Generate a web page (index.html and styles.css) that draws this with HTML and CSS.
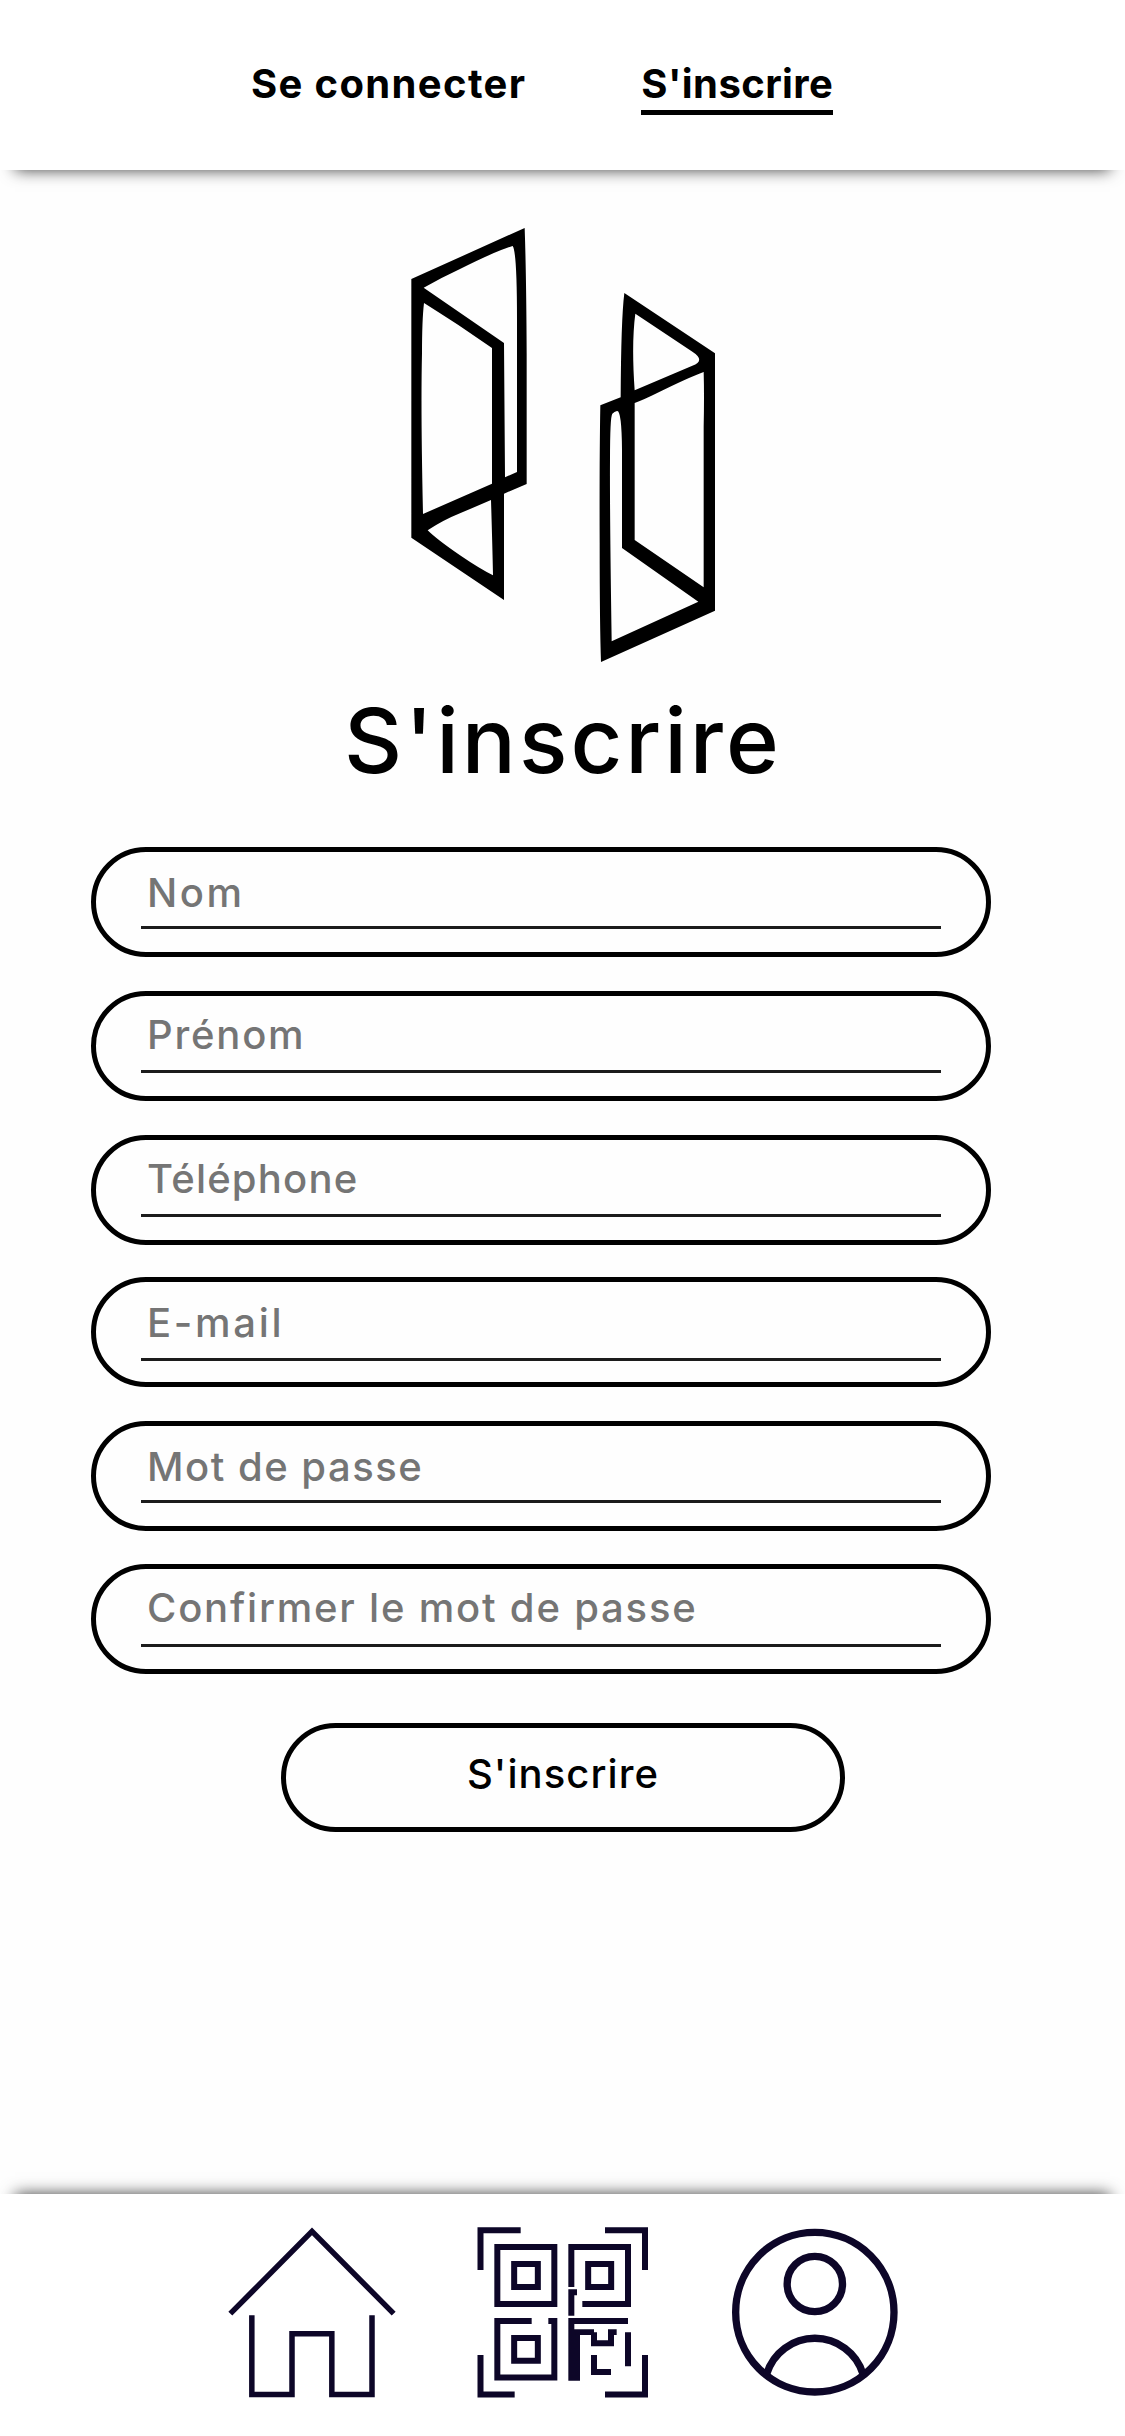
FILE: index.html
```
<!DOCTYPE html>
<html lang="fr">
<head>
<meta charset="utf-8">
<title>S'inscrire</title>
<link rel="stylesheet" href="styles.css">
</head>
<body>
<header class="topbar">
  <a class="tab tab-login">Se connecter</a>
  <a class="tab tab-active">S'inscrire</a>
</header>
<main class="content">
  <svg class="logo" viewBox="90 51 918 1308" fill-rule="evenodd" aria-hidden="true">
    <path d="M94,207 L434,54 Q439,200 440,430 V822 L372,851 V1170 L94,983Z
      M131,233 Q180,205 240,177 Q350,122 398,108 Q411,125 411,330 V786 L375,802 L372,399Z
      M132,279 Q170,303 235,345 L336,414 V821 L129,912 Q122,600 126,430 Q126,330 132,279Z
      M143,961 Q190,930 240,910 L333,870 Q337,1000 339,1096 Q300,1077 240,1036 Q170,988 143,961Z"/>
    <path d="M733,249 L1005,430 V1202 L663,1356 Q659,1250 659,1000 Q658,750 661,586 L722,562 Q723,330 733,249Z
      M766,311 L935,424 Q979,452 937,467 L764,541 Q754,400 766,311Z
      M764,579 Q790,570 830,550 Q920,505 971,486 Q973,560 971,650 V1132 L764,990Z
      M711,603 Q725,600 726,720 V1014 L955,1175 L695,1294 Q689,900 690,750 Q690,620 697,611 Q703,605 711,603Z"/>
  </svg>
  <h1 class="title">S'inscrire</h1>
  <form class="form">
    <label class="field"><input class="input input-lastname" type="text" placeholder="Nom"></label>
    <label class="field"><input class="input input-firstname" type="text" placeholder="Prénom"></label>
    <label class="field"><input class="input input-phone" type="tel" placeholder="Téléphone"></label>
    <label class="field"><input class="input input-email" type="email" placeholder="E-mail"></label>
    <label class="field"><input class="input input-password" type="password" placeholder="Mot de passe"></label>
    <label class="field"><input class="input input-confirm" type="password" placeholder="Confirmer le mot de passe"></label>
  </form>
  <button class="submit" type="button">S'inscrire</button>
</main>
<footer class="navbar">
  <svg class="icon icon-home" viewBox="51 108 510 519" stroke-width="16.5">
    <path d="M61,371 L306,124 L551,371"/>
    <path d="M125.5,376 V613.5 H246 V431.5 H365.5 V613.5 H486 V376"/>
  </svg>
  <svg class="icon icon-scan" viewBox="48 48 519 519" stroke-width="18">
    <path d="M182,60.5 H61.5 V180 M435,60.5 H555 V180 M61.5,435 V553.5 H164 M435,553.5 H555 V435"/>
    <path d="M112,111 H283 V282 H112Z M162.5,162 H233.5 V231 H162.5Z"/>
    <path d="M334,231 V111 H504 V282 H367 M384.5,162 H453.5 V231 H384.5Z"/>
    <path d="M351,246.5 H334 V317"/>
    <path d="M215,333 H112 V502.5 H283 V333 H265 M162.5,384 H233.5 V452 H162.5Z"/>
    <path class="solid" d="M325,324 H504 V342 H343 V358 H402 V367 H411 V391 H444 V358 H470 V375 H462 V409 H393 V375 H360 V512 H325Z"/>
    <path d="M402,435 V486 H453 M504,367 V469"/>
  </svg>
  <svg class="icon icon-user" viewBox="63 48 504 516" stroke-width="22">
    <ellipse cx="314.5" cy="306.5" rx="237.5" ry="239.5"/>
    <circle cx="314.5" cy="222" r="83"/>
    <path d="M170,492 A151,151 0 0 1 459,492"/>
  </svg>
</footer>
</body>
</html>
```
FILE: styles.css
```
* { box-sizing: border-box; }

body {
  margin: 0;
  height: 2436px;
  display: flex;
  flex-direction: column;
  background: #fefefe;
  color: #000;
  font-family: Inter, "Open Sans", sans-serif;
  font-size: 40px;
  font-weight: 500;
}

.topbar {
  height: 170px;
  padding: 61px 0 0 251px;
  display: flex;
  align-items: flex-start;
  gap: 115px;
  background: #fff;
  box-shadow: 0 15px 15px -15px rgba(0, 0, 0, 0.75);
}

.tab {
  font-weight: 700;
  line-height: 46px;
  white-space: nowrap;
}

.tab-login { letter-spacing: 1.35px; }

.tab-active {
  letter-spacing: 0.4px;
  padding-bottom: 3px;
  border-bottom: 5px solid #000;
}

.content {
  flex: 1;
  padding-top: 57px;
  display: flex;
  flex-direction: column;
}

.logo {
  width: 306px;
  height: 436px;
  margin-left: 410px;
}

.title {
  margin: 28px 0 56px 344px;
  font-size: 90px;
  font-weight: 500;
  line-height: 100px;
  letter-spacing: 2.96px;
}

.form {
  width: 900px;
  margin-left: 91px;
  display: grid;
  grid-template-rows: 144px 144px 142px 144px 143px 110px;
}

.field {
  height: 110px;
  padding: 8px 45px 0;
  border: 5px solid #000;
  border-radius: 55px;
}

.input {
  display: block;
  width: 100%;
  height: 69px;
  padding: 0 6px 1px;
  border: 0;
  border-bottom: 3px solid #1c1c1c;
  border-radius: 0;
  outline: 0;
  background: transparent;
  font: inherit;
}

.input::placeholder {
  color: #757575;
  opacity: 1;
}

.input-lastname { letter-spacing: 2.5px; }
.input-firstname { letter-spacing: 1.8px; padding-bottom: 5px; }
.input-phone { letter-spacing: 1.2px; padding-bottom: 5px; }
.input-email { letter-spacing: 2.7px; height: 71px; padding-bottom: 3px; }
.input-password { letter-spacing: 1.5px; padding-bottom: 2px; }
.input-confirm { letter-spacing: 1.8px; height: 70px; padding-bottom: 6px; }

.submit {
  width: 564px;
  height: 109px;
  margin: 49px 0 0 281px;
  padding: 0 0 8px;
  border: 5px solid #000;
  border-radius: 55px;
  background: transparent;
  color: #000;
  font: inherit;
  letter-spacing: 1.07px;
}

.navbar {
  height: 242px;
  padding: 32px 0 0 227px;
  display: flex;
  align-items: flex-start;
  background: #fff;
  box-shadow: 0 -15px 15px -15px rgba(0, 0, 0, 0.75);
}

.icon {
  fill: none;
  stroke: #0d0628;
}

.icon .solid {
  fill: #0d0628;
  stroke: none;
}

.icon-home { width: 170px; height: 173px; }
.icon-scan { width: 173px; height: 173px; margin-left: 79px; }
.icon-user { width: 168px; height: 172px; margin-left: 82px; }
```
